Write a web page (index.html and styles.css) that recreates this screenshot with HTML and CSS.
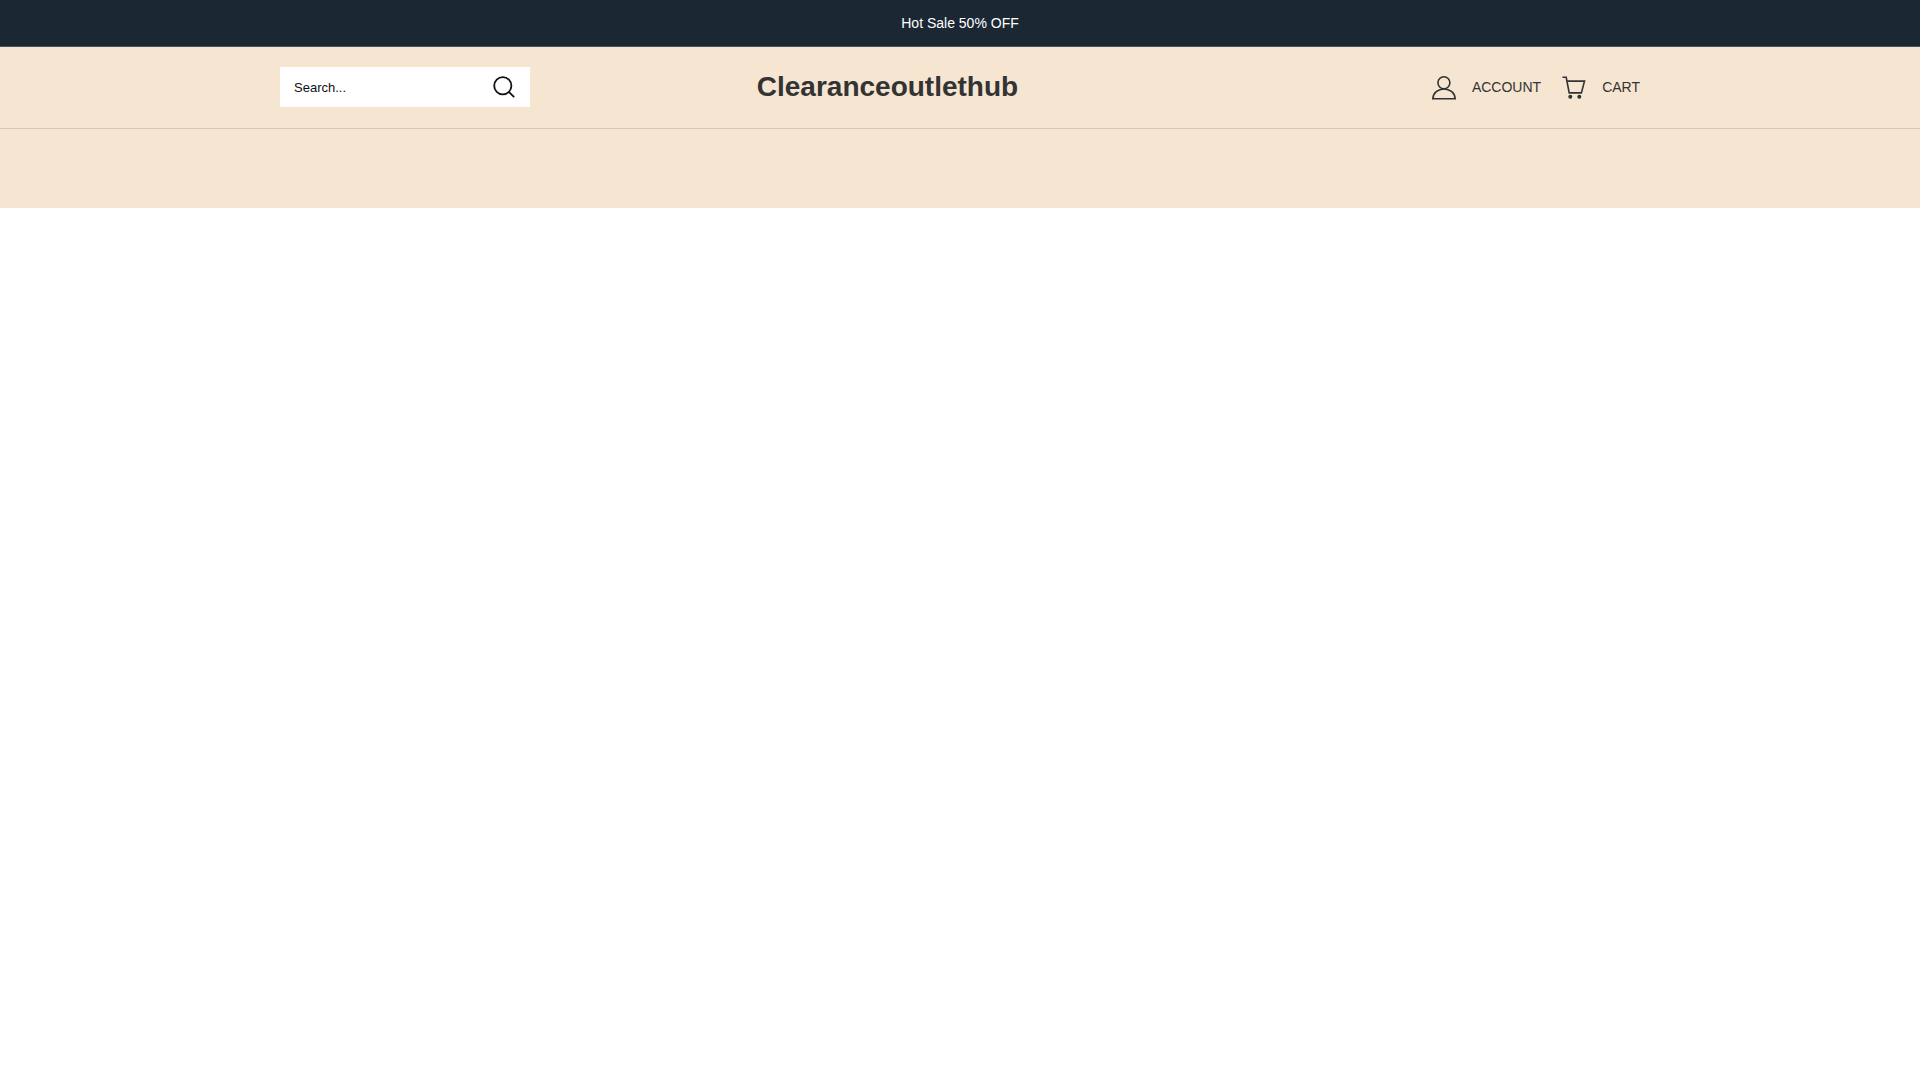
FILE: index.html
```html
<!DOCTYPE html>
<html lang="en">

<head>
    <meta charset="UTF-8">
    <meta name="viewport" content="width=device-width, initial-scale=1.0">
    <title>Clearanceoutlethub</title>
    <link rel="stylesheet" href="styles.css">
</head>

<body>
    <div class="announcement">Hot Sale 50% OFF</div>
    <header class="header">
        <div class="container header-inner">
            <form class="search" role="search">
                <input class="search-input" type="text" name="q" placeholder="Search..." aria-label="Search">
                <button class="search-button" type="submit" aria-label="Search">
                    <svg width="22" height="22" viewBox="0 0 22 22" fill="none" stroke="currentColor" stroke-width="1.8">
                        <circle cx="9.8" cy="9.8" r="8.6" />
                        <path d="M15.8 15.8 L21.2 21.2" />
                    </svg>
                </button>
            </form>
            <a class="logo" href="#">Clearanceoutlethub</a>
            <nav class="user-links">
                <a class="user-link" href="#">
                    <svg width="24" height="26" viewBox="0 -2 24 26" fill="none" stroke="currentColor" stroke-width="1.6">
                        <circle cx="11.9" cy="6.8" r="6" />
                        <path d="M0.8 22.8 C1 17 6 13 12 13 C18 13 23 17 23.2 22.8 Z" />
                    </svg>
                    <span>ACCOUNT</span>
                </a>
                <a class="user-link" href="#">
                    <svg width="24" height="26" viewBox="0 -2 24 26" fill="none" stroke="currentColor" stroke-width="1.6">
                        <path d="M0.5 1.3 H4.2 L7.2 16.9 H19.4 L22.5 5.1 H5" />
                        <circle cx="8.3" cy="20.8" r="2" fill="currentColor" stroke="none" />
                        <circle cx="17.3" cy="20.8" r="2" fill="currentColor" stroke="none" />
                    </svg>
                    <span>CART</span>
                </a>
            </nav>
        </div>
    </header>
    <div class="menu-bar"></div>
</body>

</html>
```

FILE: styles.css
```css
:root {
    --bar-color: #1b2834;
    --sand-color: #f5e5d1;
    --line-color: #d6c8b7;
    --text-color: #333333;
}

* {
    box-sizing: border-box;
}

body {
    margin: 0;
    background-color: #ffffff;
    color: var(--text-color);
    font-family: "Liberation Sans", Arial, sans-serif;
    font-size: 14px;
}

.announcement {
    padding: 12px 20px;
    background-color: var(--bar-color);
    border-bottom: 1px solid #49535d;
    color: #ffffff;
    line-height: 22px;
    text-align: center;
}

.container {
    max-width: 1400px;
    margin: 0 auto;
    padding: 0 20px;
}

.header {
    padding: 20px 0 21px;
    background-color: var(--sand-color);
    border-bottom: 1px solid var(--line-color);
}

.header-inner {
    display: flex;
    align-items: center;
    justify-content: space-between;
}

.search {
    display: flex;
    width: 250px;
    height: 40px;
    background-color: #ffffff;
}

.search-input {
    flex: 1;
    min-width: 0;
    padding: 0 14px;
    border: none;
    background: none;
    font-family: inherit;
    font-size: 13px;
}

.search-input::placeholder {
    color: #111111;
}

.search-button {
    display: flex;
    align-items: center;
    padding: 0 15px;
    border: none;
    background: none;
    color: #111111;
    cursor: pointer;
}

.logo {
    color: var(--text-color);
    font-size: 28px;
    font-weight: bold;
    line-height: 40px;
    text-decoration: none;
}

.user-links {
    display: flex;
    flex-basis: 395px;
    justify-content: flex-end;
    gap: 21px;
}

.user-link {
    display: flex;
    align-items: center;
    gap: 16px;
    color: var(--text-color);
    text-decoration: none;
}

.menu-bar {
    min-height: 79px;
    background-color: var(--sand-color);
}
```
